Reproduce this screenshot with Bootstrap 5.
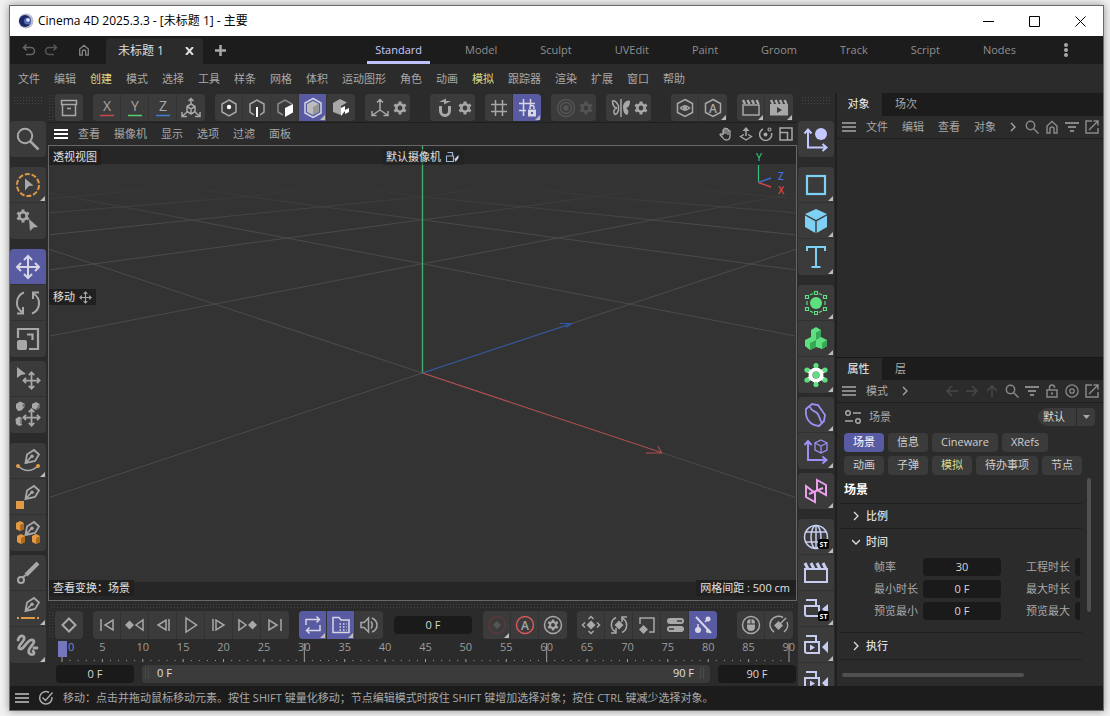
<!DOCTYPE html>
<html lang="zh-CN">
<head>
<meta charset="utf-8">
<meta name="viewport" content="width=device-width, initial-scale=1">
<title>Cinema 4D 2025.3.3 - [未标题 1] - 主要</title>
<link rel="stylesheet" href="https://cdn.jsdelivr.net/npm/bootstrap@5.3.0/dist/css/bootstrap.min.css">
<style>
:root{--bg:#2b2b2b;--dark:#1c1c1c;--btn:#3b3b3b;--on:#585ba2;--tx:#a8a8a8;--warn:#d9d98a}
body{background:#f1f1f1;font-family:"Open Sans","Noto Sans CJK SC",sans-serif;font-size:11px;line-height:16px;color:var(--tx);height:100vh;padding:5px 6px 5px 9px}
button,input{font:inherit;color:inherit;border:0;padding:0;background:none}
a{color:inherit;text-decoration:none;white-space:nowrap}
svg{display:block;flex:none;fill:none;stroke:currentColor;stroke-width:1.5}
svg .f{fill:currentColor;stroke:none}
svg text{font-family:"Open Sans",sans-serif;stroke:none;fill:currentColor}
svg text.st-text{fill:#fff;font-size:7px;font-weight:700}
.app-window{border:1px solid #6b6b6b;background:var(--bg);box-shadow:0 0 8px rgba(0,0,0,.4);height:100%}
.titlebar{height:30px;background:#fff;color:#000;font-size:12px}
.cap-btn{width:46px;height:30px;display:grid;place-items:center}
.cap-btn svg{stroke-width:1}
.tabbar{height:28px;background:var(--dark)}
.doc-tab{height:26px;align-self:flex-end;background:var(--bg);border-radius:4px 4px 0 0;color:#ddd;font-size:12px;width:97px}
.layouts{gap:27px}
.layouts a{line-height:28px;padding:0 8px;border-bottom:3px solid transparent;height:28px;color:#8f8f8f}
.layouts a.current{color:#c9cbff;border-color:#bfc1fa}
.more{margin:0 34px 0 39px}
.menubar{height:29px;gap:14px;padding-left:8px}
.warn{color:var(--warn)}
.main-area{min-height:0}
.center-area{min-width:0}
.dots{background-image:radial-gradient(#454545 35%,transparent 40%);background-size:3px 3px}
.strip{width:38px;overflow:hidden;padding-top:3px}
.strip.end{padding-left:1px}
.strip .dots{height:8px;margin:0 5px 17px 3px;flex:none}
.stack{width:36px;border-radius:4px;background:var(--btn);overflow:hidden;flex:none}
.stack button{width:36px;height:36px;display:grid;place-items:center;position:relative;border-bottom:1px solid #313131}
.stack button:last-child{border-bottom:0}
.gap-l{margin-top:10px}.gap-s{margin-top:4px}
.bar-group{display:flex;background:var(--btn);border-radius:4px;overflow:hidden;height:27px;flex:none}
.bar-group button{width:28px;height:100%;display:grid;place-items:center;position:relative;border-right:1px solid #333}
.bar-group button:last-child{border-right:0}
.bar-group button.slim{width:17px;margin-left:-1px;padding-right:3px}
.bar-group button.wide-in{border-right:0;width:29px}
.faint{color:#555}
button.on,.bar-group button.on,.stack button.on{background:var(--on);color:#d6d6e6}
.corner::after{content:"";position:absolute;right:1px;bottom:1px;border-style:solid;border-width:0 0 5px 5px;border-color:transparent transparent #bbb transparent}
.toolbar-top{height:29px;gap:10px;padding-top:1px;overflow:hidden}
.grip{width:5px;height:27px;margin-right:-8px}
.extra{margin-left:10px}
.panel-menu{height:23px;border-top:1px solid #1e1e1e;padding:0 4px 1px 6px}
.links{display:flex;gap:14px;margin-left:10px}
.tools{display:flex;align-items:center;gap:6px;margin-left:auto}
.viewport{border:1px solid #686868;background:#333;min-height:0;position:relative;overflow:hidden;color:#e0e0e0}
.viewport .scene{width:100%;height:100%;stroke-width:1}
.band{position:absolute;left:0;right:0;height:18px;background:#262626}
.band.top{top:0}.band.bottom{bottom:0}
.hud{position:absolute;display:flex;align-items:center;gap:4px;background:#202020;padding:0 4px;white-space:nowrap}
.hud.view{left:0;top:3px}
.hud.cam{left:50%;top:3px;transform:translateX(-50%);background:rgba(30,30,30,.5)}
.hud.tool{left:0;top:calc(32% - 2px)}
.hud.xform{left:0;bottom:4px}
.hud.spacing{right:0;bottom:4px;padding-right:6px}
.num{background:#1a1a1a;border-radius:4px;text-align:center;height:18px;width:78px;color:#d8d8d8;flex:none;padding-bottom:2px}
.divider{height:6px;margin:2px}
.controls{height:28px;gap:10px}
.controls .bar-group,.controls .grip{height:28px}
.controls .num{margin:5px 0 0 1px}
.controls .num + .bar-group{margin-left:1px}
.ruler{height:26px;margin:0 8px 0 14px;position:relative;color:#9c9c9c}
.ruler-labels{display:grid;grid-template-columns:1fr repeat(17,2fr) 1fr;text-align:center}
.ruler-labels span:first-child{text-align:left;padding-left:6px;color:#7f82cf}
.ruler-labels span:last-child{text-align:right;margin-right:-6px}
.ruler-ticks{position:absolute;inset:3px 0 0 0;width:100%;height:20px;overflow:visible;stroke-width:1;stroke:#a0a0a0}
.playhead{position:absolute;left:-4px;top:2px;width:9px;height:16px;background:#7577bd}
.range{height:21px;gap:8px;padding:0 1px 3px 8px}
.range-bar{height:18px;background:var(--btn);border-radius:4px;color:#e0e0e0;padding:0 4px 2px 3px;gap:6px}
.notch{width:6px;height:12px;background:repeating-linear-gradient(90deg,#4a4a4a 0 1px,transparent 1px 3px)}
.statusbar{height:24px;background:var(--dark);padding-left:5px;gap:9px}
.side-panel{width:268px;border-left:2px solid #202020;min-height:0}
.tabs{height:23px;background:var(--dark)}
.tabs button{padding:0 13px 2px}
.tabs button.current{background:var(--bg);color:#f0f0f0;width:45px;padding:0 2px 2px 0}
.tabs.split{border-top:1px solid #171717}
.tabs.split button{padding-bottom:0}
.side-menu{height:23px;border-bottom:1px solid #1e1e1e;padding:0 4px 1px 5px}
.side-menu .chev{margin-left:14px}
.side-menu .tools{color:#888}
.objects{height:218px}
.tools .dim{color:#484848}
.object-row{height:27px}
.combo{height:18px;background:var(--btn);border-radius:9px 4px 4px 9px;color:#dcdcdc}
.combo select{appearance:none;border:0;background:none;color:inherit;font:inherit;padding:0 11px 0 5px;outline:0}
.combo svg{border-left:1px solid #2b2b2b;color:#a8a8a8}
.chips{gap:4px;padding:3px 7px 0}
.chips .chip-row{display:flex;gap:4px}
.chips button{background:var(--btn);border-radius:4px;height:19px;padding:0 9px 1px;color:#cfcfcf;white-space:nowrap}
.chips button.on{color:#fff;background:var(--on)}
.chips button.warn{color:var(--warn)}
.attrs{padding:0 21px 0 4px;margin-top:2px;position:relative}
.attrs h2{font-size:12px;line-height:16px;font-weight:600;color:#fff;margin:0;padding:5px 0 5px 3px;border-bottom:1px solid #1f1f1f}
.sect{color:#dedede;gap:7px;padding:0 0 1px 12px;font-weight:500;height:25px}
.sect.open{height:27px;gap:6px;padding-left:11px}
.sect.last{height:27px}
.sect-box{border-bottom:1px solid #1f1f1f}
.time-box{height:104px}
.fields{display:grid;grid-template-columns:49px 78px 74px 5px;row-gap:4px;padding:2px 0 0 33px;overflow:hidden}
.fields label{line-height:18px;white-space:nowrap}
.fields label:nth-of-type(even){margin-left:25px}
.fields .num.cut{width:5px;border-radius:4px 0 0 4px}
.vbar{position:absolute;right:12px;top:1px;width:4px;height:134px;border-radius:2px;background:#505050}
.hbar{width:182px;height:4px;border-radius:2px;background:#505050;margin:13px 0 0 5px}
.c-axis{color:#c3c9ff}.c-spline{color:#7fd0f5}.c-gen{color:#5fe080}.c-def{color:#9a90f5}.c-sym{color:#eba0ee}.c-cam{color:#c6cdf0}
</style>
</head>
<body>
<svg width="0" height="0" class="position-absolute" aria-hidden="true">
<defs>
<g id="nib"><path stroke-width="1.800" d="M11.500 16L13 7.500L20 3L25 7.500L21 14ZM11.500 16L17.500 9.500"/><circle class="f" cx="18" cy="9.300" r="1.800"/></g>
<g id="st"><rect x="16" y="16" width="11" height="10" rx="2" fill="#000" stroke="none"/><text class="st-text" x="21.500" y="24" text-anchor="middle">ST</text></g>
</defs>
<symbol id="burger" viewBox="0 0 14 12"><path stroke-width="2" d="M0 2H14M0 6H14M0 10H14"/></symbol>
<symbol id="undo" viewBox="0 0 14 14"><path d="M4.500 1.500L1.500 4.500L4.500 7.500M1.500 4.500H9A3 3 0 0 1 9 11.500H4"/></symbol>
<symbol id="redo" viewBox="0 0 14 14"><path d="M9.500 1.500L12.500 4.500L9.500 7.500M12.500 4.500H5A3 3 0 0 0 5 11.500H10"/></symbol>
<symbol id="home" viewBox="0 0 14 14"><path d="M2 13V6L7 1.500L12 6V13H9V9A2 2 0 0 0 5 9V13Z"/></symbol>
<symbol id="search" viewBox="0 0 14 14"><circle cx="5.500" cy="5.500" r="4.200"/><path d="M8.500 8.500L13.500 13.500"/></symbol>
<symbol id="filter" viewBox="0 0 14 14"><path stroke-width="2" d="M0 3H14M3 7H11M5 11H9"/></symbol>
<symbol id="popout" viewBox="0 0 14 14"><path d="M7 1H1V13H13V8M4 10L13 1M8.500 1H13V5.500"/></symbol>
<symbol id="left" viewBox="0 0 14 14"><path d="M13 7H2M7 2L2 7L7 12"/></symbol>
<symbol id="right" viewBox="0 0 14 14"><path d="M1 7H12M7 2L12 7L7 12"/></symbol>
<symbol id="up" viewBox="0 0 14 14"><path d="M7 13V2M2 7L7 2L12 7"/></symbol>
<symbol id="lock" viewBox="0 0 14 14"><rect x="2" y="6" width="10" height="7"/><path d="M4.500 6V3.500A2.500 2.500 0 0 1 9.500 3.500V4"/><rect class="f" x="6" y="8.500" width="2" height="2"/></symbol>
<symbol id="target" viewBox="0 0 16 16"><circle cx="8" cy="8" r="7"/><circle cx="8" cy="8" r="2.500"/></symbol>
<symbol id="chev" viewBox="0 0 6 10"><path stroke-width="1.300" d="M1 1L5 5L1 9"/></symbol>
<symbol id="chevd" viewBox="0 0 8 6"><path stroke-width="1.300" d="M0 1L4 5L8 1"/></symbol>
<symbol id="hand" viewBox="0 0 14 14"><path stroke-width="1.300" d="M4 8V3.500Q4 2.500 5 3V7M5 7V2Q6 .5 7 2V7M7 7V2.500Q8 1 9 2.500V8M9 8V4Q10 3 11 4V9Q11 13 7.500 13Q5 13 3.500 10.500L1 7.500Q1.500 6 4 8"/></symbol>
<symbol id="updown" viewBox="0 0 14 14"><path d="M7 2V9"/><path class="f" d="M7 0L10.500 4H3.500Z"/><path stroke-width="1.300" d="M5 7.500L1.500 9.500L7 13L12.500 9.500L9 7.500"/></symbol>
<symbol id="orbit" viewBox="0 0 14 14"><path d="M4 2A6 6 0 1 0 12.500 6"/><circle class="f" cx="6.500" cy="7.500" r="2"/><circle cx="10.500" cy="2.500" r="1.500" stroke-width="1.200"/></symbol>
<symbol id="views" viewBox="0 0 14 14"><path d="M1 1H13V13H1ZM1 5.500H8.500V13"/></symbol>
<symbol id="gear" viewBox="0 0 14 14"><circle cx="7" cy="7" r="3.700" stroke-width="2.600"/><path stroke-width="3" d="M7 .4V2.500M7 11.500V13.600M1.300 3.700L3 4.700M11 9.300L12.700 10.300M1.300 10.300L3 9.300M11 4.700L12.700 3.700"/></symbol>
<symbol id="archive" viewBox="0 0 24 24"><rect x="4.500" y="4.500" width="15" height="4"/><path d="M5.500 8.500V19.500H18.500V8.500M10 12.500H14"/></symbol>
<symbol id="coord" viewBox="0 0 24 24"><path d="M12 8V3M9.500 5L12 2.500L14.500 5M8 16L3.500 20M3 16V20.500H8M16 16L20.500 20M21 16V20.500H16M12 8L16 10.500V15.500L12 18L8 15.500V10.500ZM8 10.500L12 13L16 10.500M12 13V18"/></symbol>
<symbol id="hexpoint" viewBox="0 0 24 24"><path d="M12 4L19 8V16L12 20L5 16V8Z"/><circle cx="12" cy="11" r="2.200" fill="#fff" stroke="none"/></symbol>
<symbol id="hexedge" viewBox="0 0 24 24"><path d="M9 19L5 16V8L12 4L19 8V16L15 19"/><path stroke="#fff" stroke-width="2" d="M12 11V21"/></symbol>
<symbol id="hexface" viewBox="0 0 24 24"><path stroke="#8a8a8a" d="M19 8L12 4L5 8V16L10 19"/><path fill="#fff" stroke="none" d="M12 12L20 8V16.500L12 21Z"/></symbol>
<symbol id="hexsolid" viewBox="0 0 24 24"><path d="M12 2.500L20 7V17L12 21.500L4 17V7Z"/><path stroke="none" fill="#bdbdbd" d="M12 5L18 8L12 11.500V19L6 16V8Z"/><path stroke="none" fill="#989898" d="M18 8V16L12 19V11.500Z"/></symbol>
<symbol id="hextex" viewBox="0 0 24 24"><path class="f" d="M11 3L18 6.500L12 10V19L4 16V7Z"/><path fill="#fff" stroke="none" d="M12 12L16 10V14L20 12V16L16 18V15L12 20Z"/></symbol>
<symbol id="axis" viewBox="0 0 24 24"><path d="M12 14V4M9 6.500L12 3.500L15 6.500M12 14L4.500 19M4 15V19.500H8.500M12 14L19.500 19M20 15V19.500H15.500"/></symbol>
<symbol id="magnet" viewBox="0 0 24 24"><path stroke-width="3" d="M7.500 10V15A4.500 4.500 0 0 0 16.500 15V10"/><path class="f" d="M6 6L13 2.500V5H18L11 8.500V6Z"/></symbol>
<symbol id="grid" viewBox="0 0 24 24"><path d="M8.500 4V20M15.500 4V20M4 8.500H20M4 15.500H20"/></symbol>
<symbol id="gridlock" viewBox="0 0 24 24"><path d="M8.500 3V20M15.500 3V10M4 7.500H20M4 14.500H11"/><rect class="f" x="13" y="13.500" width="8" height="7"/><path d="M15 13V11.500A2 2 0 0 1 19 11.500V13"/><rect x="16" y="16" width="2" height="2" fill="#585ba2" stroke="none"/></symbol>
<symbol id="rings" viewBox="0 0 24 24"><circle cx="12" cy="12" r="8.500"/><circle cx="12" cy="12" r="5.500"/><circle class="f" cx="12" cy="12" r="2.800"/></symbol>
<symbol id="butterfly" viewBox="0 0 24 24"><path d="M12 3V21M9.500 10C8 6 5 4 3.500 5C3.500 9 5 11.500 8 12C4.500 13 4 16 6 18.500C8.500 18 10 15.500 9.500 10"/><path class="f" d="M14 10C15 6 18 3.500 21 5C21 9 20 11.500 17 12C20 14 20 17 18 19C15 18 14 15 14 10"/></symbol>
<symbol id="hexeye" viewBox="0 0 24 24"><path d="M12 3.500L19.500 7.500V16.500L12 20.500L4.500 16.500V7.500Z"/><path d="M7.500 12Q12 7.500 16.500 12Q12 16.500 7.500 12Z"/><circle class="f" cx="12" cy="12" r="2"/></symbol>
<symbol id="hexa" viewBox="0 0 24 24"><path d="M12 3.500L19.500 7.500V16.500L12 20.500L4.500 16.500V7.500Z"/><text x="12" y="16.500" font-size="12" font-weight="600" text-anchor="middle">A</text></symbol>
<symbol id="clap" viewBox="0 0 24 24"><path d="M4 9V19H20V9Z"/><path stroke-width="2.500" d="M4 4L6 8M8.500 4L10.500 8M13 4L15 8M17.500 4L19.500 8"/></symbol>
<symbol id="clapplay" viewBox="0 0 24 24"><path class="f" d="M3 8H21V19.500H3Z"/><path stroke-width="2.500" d="M4 4L6 8M8.500 4L10.500 8M13 4L15 8M17.500 4L19.500 8"/><path fill="#3b3b3b" stroke="none" d="M10 11L15 14L10 17Z"/></symbol>
<symbol id="key" viewBox="0 0 24 24"><path stroke-width="2" d="M12 5.500L18.500 12L12 18.500L5.500 12Z"/></symbol>
<symbol id="first" viewBox="0 0 24 24"><path d="M6 6V18M18 7V17L10 12Z"/></symbol>
<symbol id="prevkey" viewBox="0 0 24 24"><path class="f" d="M2 12L6.500 7.500L11 12L6.500 16.500Z"/><path d="M20 7V17L13 12Z"/></symbol>
<symbol id="prev" viewBox="0 0 24 24"><path d="M18 6V18M15 7V17L7 12Z"/></symbol>
<symbol id="play" viewBox="0 0 24 24"><path d="M7 5V19L17.500 12Z"/></symbol>
<symbol id="gear24" viewBox="0 0 24 24"><circle cx="12" cy="12" r="8.500"/><circle cx="12" cy="12" r="3" stroke-width="2"/><path stroke-width="2.500" d="M12 6.500V9M12 15V17.500M7.200 9.200L9.500 10.500M14.500 13.500L16.800 14.800M7.200 14.800L9.500 13.500M14.500 10.500L16.800 9.200"/></symbol>
<symbol id="loop" viewBox="0 0 24 24"><path d="M5 12V6.500H18M15.500 3.500L18.500 6.500L15.500 9.500M19 12V17.500H6M8.500 14.500L5.500 17.500L8.500 20.500"/></symbol>
<symbol id="folder" viewBox="0 0 24 24"><path d="M4 4.500H10L12 7H20V19.500H4Z"/><path stroke-width="1.500" stroke-dasharray="1.500 2" d="M10.500 11H18M10.500 14H18M10.500 17H18"/></symbol>
<symbol id="sound" viewBox="0 0 24 24"><path d="M4 9.500H7L11.500 5V19L7 14.500H4ZM14 8.500Q16.500 12 14 15.500M15 5Q20 7.500 20 12Q20 17 15 19"/></symbol>
<symbol id="reckey" viewBox="0 0 24 24"><circle cx="12" cy="12" r="8.500" stroke="#5e3838"/><path class="f" d="M12 8L16 12L12 16L8 12Z"/></symbol>
<symbol id="auto" viewBox="0 0 24 24"><circle cx="12" cy="12" r="8.500" stroke="#d8595c"/><text x="12" y="16.500" font-size="12" font-weight="600" text-anchor="middle">A</text></symbol>
<symbol id="kpos" viewBox="0 0 24 24"><path class="f" d="M12 7.500L16.500 12L12 16.500L7.500 12Z"/><path d="M9.500 6L12 3.500L14.500 6M9.500 18L12 20.500L14.500 18M6 9.500L3.500 12L6 14.500M18 9.500L20.500 12L18 14.500"/></symbol>
<symbol id="krot" viewBox="0 0 24 24"><path class="f" d="M12 7.500L16.500 12L12 16.500L7.500 12Z"/><path d="M9 19A8 8 0 0 1 9 4.500M4 20H9V15M15 5A8 8 0 0 1 15 19.500M20 4H15V9"/></symbol>
<symbol id="kscale" viewBox="0 0 24 24"><path d="M5 11V5H19V19H14"/><path class="f" d="M8.500 12L13 16.500L8.500 21L4 16.500Z"/></symbol>
<symbol id="kparam" viewBox="0 0 24 24"><rect class="f" x="4" y="5" width="17" height="6" rx="3"/><rect class="f" x="4" y="13" width="17" height="6" rx="3"/><path stroke="#3b3b3b" d="M14 8H19M6 16H11"/></symbol>
<symbol id="kpla" viewBox="0 0 24 24"><path stroke-width="2" d="M5 4L20 20"/><circle class="f" cx="17" cy="6" r="2.500"/><circle class="f" cx="7" cy="17" r="3"/><circle class="f" cx="17" cy="18" r="2"/><path d="M7 17V11M17 6L14 9"/></symbol>
<symbol id="mouse" viewBox="0 0 24 24"><circle cx="12" cy="12" r="8.500"/><rect class="f" x="8" y="6" width="8" height="12" rx="4"/><path stroke="#3b3b3b" stroke-width="1" d="M8 11H16M12 6V11"/></symbol>
<symbol id="dial" viewBox="0 0 24 24"><path d="M7 19A8.500 8.500 0 0 1 16 4.500M20 9A8.500 8.500 0 0 1 17 19M12 12L19 5"/><path class="f" d="M11.500 8L16 12.500L11.500 17L7 12.500Z"/></symbol>
<symbol id="check" viewBox="0 0 16 16"><path d="M14 7A6.200 6.200 0 1 1 11 2.500M4.500 7.500L7.500 10.500L14.500 2.500"/></symbol>
<!-- tool strip symbols -->
<symbol id="mag" viewBox="0 0 28 28"><circle cx="11" cy="11" r="7.200" stroke-width="2"/><path stroke-width="2.500" d="M16 16L24.500 24.500"/></symbol>
<symbol id="select" viewBox="0 0 28 28"><circle cx="14" cy="14" r="11" stroke="#e29a45" stroke-width="2" stroke-dasharray="5 1.900"/><path class="f" d="M11 7.500L19.500 14.500L15 15L11 19.500Z"/></symbol>
<symbol id="gearcur" viewBox="0 0 28 28"><g transform="translate(2 2)"><circle cx="7" cy="7" r="3.700" stroke-width="2.600"/><path stroke-width="3" d="M7 .4V2.500M7 11.500V13.600M1.300 3.700L3 4.700M11 9.300L12.700 10.300M1.300 10.300L3 9.300M11 4.700L12.700 3.700"/></g><path class="f" d="M15 12L24 20L19.500 20.500L16 24Z"/></symbol>
<symbol id="move" viewBox="0 0 28 28"><path stroke-width="2" d="M14 3V25M3 14H25M10 7L14 3L18 7M10 21L14 25L18 21M7 10L3 14L7 18M21 10L25 14L21 18"/></symbol>
<symbol id="rotate" viewBox="0 0 28 28"><path stroke-width="2" d="M8 23A11 11 0 0 1 10 3.500M3 24.500H9V18M20 5A11 11 0 0 1 18 24.500M25 3.500H19V10"/></symbol>
<symbol id="scale" viewBox="0 0 28 28"><path stroke-width="2.200" d="M4 13V4H24V24H15M13 9.500H18.500V15"/><rect class="f" x="3" y="15" width="10" height="10" rx="2"/></symbol>
<symbol id="curmove" viewBox="0 0 28 28"><path class="f" d="M3 2L12 9L7 10L3 13Z"/><g transform="translate(8 6) scale(.68)"><path stroke-width="2.600" d="M14 2V26M2 14H26M10 6L14 2L18 6M10 22L14 26L18 22M6 10L2 14L6 18M22 10L26 14L22 18"/></g></symbol>
<symbol id="objmove" viewBox="0 0 28 28"><g class="f"><path d="M2 3L6 .5L10.500 2.500V6L7.500 9.500L4 10L2 7ZM18 3L22 1L25.500 3V7L22 9L18 7ZM1.500 18L5 15.500L8 17V24L5 25L2 23Z"/></g><path stroke="#6a6a6a" stroke-width="1.500" d="M9.500 3V6M24.500 4V7L22 8.500M7 17.500V23"/><g transform="translate(8 7) scale(.68)"><path stroke-width="2.600" d="M14 2V26M2 14H26M10 6L14 2L18 6M10 22L14 26L18 22M6 10L2 14L6 18M22 10L26 14L22 18"/></g></symbol>
<symbol id="spline" viewBox="0 0 28 28"><use href="#nib"/><path d="M4 19Q14 28 24 19"/><circle cx="4" cy="19" r="2" fill="#e29a45" stroke="none"/><circle cx="24" cy="19" r="2" fill="#e29a45" stroke="none"/></symbol>
<symbol id="polypen" viewBox="0 0 28 28"><use href="#nib"/><rect x="2" y="18" width="8" height="8" fill="#e29a45" stroke="none"/></symbol>
<symbol id="cubepen" viewBox="0 0 28 28"><use href="#nib"/><g stroke="none"><path fill="#e29a45" d="M2 4L6 2L10 4V10L6 12L2 10ZM3 17L7 15L11 17V23L7 25L3 23ZM18 17L22 15L26 17V23L22 25L18 23Z"/><path fill="#b06a1c" d="M6 6L10 4V10L6 12ZM7 19L11 17V23L7 25ZM22 19L26 17V23L22 25Z"/></g></symbol>
<symbol id="brush" viewBox="0 0 28 28"><path stroke-width="4" d="M12 16L24 4"/><circle cx="7" cy="21" r="3" stroke-width="2"/><path stroke-width="2" d="M9 18L12 16"/></symbol>
<symbol id="linepen" viewBox="0 0 28 28"><use href="#nib"/><path stroke="#e29a45" stroke-width="2" d="M3 23H5M7 23H21M23 23H25"/></symbol>
<symbol id="squiggle" viewBox="0 0 28 28"><path stroke-width="2.800" stroke-linecap="round" d="M4 9C6 2 13 5 9 10C5 15 3 18 7 18C11 17 14 7 19 9C23 12 12 18 15 22C18 25 22 23 19 20M20 17L23 17"/></symbol>
<symbol id="objaxis" viewBox="0 0 28 28"><path stroke-width="2" d="M6 5V22.500H24M2.500 8.500L6 4.500L9.500 8.500M20.500 19L24.500 22.500L20.500 26"/><circle class="f" cx="19" cy="9" r="6"/></symbol>
<symbol id="rectspl" viewBox="0 0 28 28"><rect x="5" y="5" width="18" height="18" stroke-width="2.200"/></symbol>
<symbol id="cube" viewBox="0 0 28 28"><path class="f" d="M14 2L25 7L14 13L3 7ZM3 8.500L13.300 14.200V26L3 20ZM25 8.500L14.700 14.200V26L25 20Z"/></symbol>
<symbol id="textobj" viewBox="0 0 28 28"><path stroke-width="2" d="M5 8V4H23V8M14 4V24M9.500 24H18.500"/></symbol>
<symbol id="field" viewBox="0 0 28 28"><circle class="f" cx="14" cy="14" r="6"/><path d="M12.500 2.500H15.500V5.500H12.500ZM12.500 22.500H15.500V25.500H12.500ZM3.500 6.500H6.500V9.500H3.500ZM21.500 6.500H24.500V9.500H21.500ZM3.500 18.500H6.500V21.500H3.500ZM21.500 18.500H24.500V21.500H21.500ZM5 12V16M23 12V16M8 6L11 4.500M17 4.500L20 6M8 22L11 23.500M17 23.500L20 22" stroke-width="1.200"/></symbol>
<symbol id="blocks" viewBox="0 0 28 28"><path class="f" d="M9 5L14 2L19 5V12L25 15V21L20 24L14 22L8 25L3 21V15L9 12Z"/><path stroke="none" fill="#37a855" d="M14 7.500L19 5V12L14 15ZM8 18L14 15V22L8 25ZM20 18L25 15V21L20 24Z"/></symbol>
<symbol id="cloner" viewBox="0 0 28 28"><circle cx="14" cy="14" r="5.500" stroke="#fff" stroke-width="4"/><path stroke="#fff" stroke-width="4" d="M6 9.500L10 12M22 9.500L18 12M6 18.500L10 16M22 18.500L18 16M14 5V9M14 19V23"/><g class="f"><circle cx="14" cy="4.500" r="2.600"/><circle cx="14" cy="23.500" r="2.600"/><circle cx="5" cy="9" r="2.600"/><circle cx="23" cy="9" r="2.600"/><circle cx="5" cy="19" r="2.600"/><circle cx="23" cy="19" r="2.600"/><circle cx="14" cy="14" r="3.200"/></g></symbol>
<symbol id="deform" viewBox="0 0 28 28"><path stroke-width="1.800" d="M4 8L10 3L16 4L23 14L22 20L17 25C8 24 3 18 4 8ZM8 6C10 11 12 9 15 12C18 15 17 18 20 22"/></symbol>
<symbol id="axiscube" viewBox="0 0 28 28"><path stroke-width="2" d="M6 5V23H24M2.500 8L6 4L9.500 8M20.500 19.500L24.500 23L20.500 26.500"/><path stroke-width="1.300" d="M19 3L25 6V13L19 16L13 13V6ZM13 6L19 9L25 6M19 9V16"/></symbol>
<symbol id="sym" viewBox="0 0 28 28"><path stroke-width="2" d="M4 9L13 16V25L4 20ZM15 3L24 8V18L15 13ZM7 17L21 11"/></symbol>
<symbol id="globe" viewBox="0 0 28 28"><circle cx="14" cy="14" r="11.500"/><ellipse cx="14" cy="14" rx="5" ry="11.500"/><path d="M4 9H24M4 19H24M14 2.500V25.500"/><use href="#st"/></symbol>
<symbol id="clapbig" viewBox="0 0 28 28"><path stroke-width="2" d="M3 10V23H25V10Z"/><path stroke-width="3" d="M3 4L6 10M9 4L12 10M15 4L18 10M21 4L24 10"/></symbol>
<symbol id="camst" viewBox="0 0 28 28"><path stroke-width="2" d="M4 5H14V11M3 11H17V21H5A2 2 0 0 1 3 19Z"/><path class="f" d="M20 14L26 9V20Z"/><use href="#st"/></symbol>
<symbol id="camplay" viewBox="0 0 28 28"><path stroke-width="2" d="M4 5H14V11M3 11H17V22H5A2 2 0 0 1 3 20Z"/><path class="f" d="M20 16L26 10V22ZM8 13.500L13 16.500L8 19.500Z"/></symbol>
</svg>

<div class="app-window d-flex flex-column">
<header class="titlebar d-flex align-items-center flex-shrink-0">
 <svg class="ms-2" width="16" height="16" viewBox="0 0 16 16"><circle cx="8" cy="8" r="7.500" fill="#b9bdcb" stroke="none"/><circle cx="7" cy="8" r="6" fill="#1b2766" stroke="none"/><circle cx="9.500" cy="8" r="3.500" fill="#5668b8" stroke="none"/><circle cx="10" cy="7" r="1.800" fill="#e8ecff" stroke="none"/></svg>
 <span class="ps-1">Cinema 4D 2025.3.3 - [未标题 1] - 主要</span>
 <div class="d-flex ms-auto">
  <button class="cap-btn" aria-label="最小化"><svg width="11" height="11"><path d="M0 5.500H11"/></svg></button>
  <button class="cap-btn" aria-label="最大化"><svg width="11" height="11"><path d="M.5 .5H10.500V10.500H.5Z"/></svg></button>
  <button class="cap-btn" aria-label="关闭"><svg width="11" height="11"><path d="M.5 .5L10.500 10.500M10.500 .5L.5 10.500"/></svg></button>
 </div>
</header>

<div class="tabbar d-flex align-items-center flex-shrink-0">
 <button class="ms-2 ps-1" aria-label="撤销"><svg width="14" height="14" color="#666"><use href="#undo"/></svg></button>
 <button class="ms-1 ps-1" aria-label="重做"><svg width="14" height="14" color="#555"><use href="#redo"/></svg></button>
 <button class="ms-3 ps-1" aria-label="主页"><svg width="12" height="12" color="#888"><use href="#home"/></svg></button>
 <div class="doc-tab d-flex align-items-center justify-content-between ms-3 px-2"><span class="ps-1">未标题 1</span><button aria-label="关闭标签"><svg width="11" height="8" viewBox="0 0 11 8"><path stroke-width="2" d="M2 0L9 8M9 0L2 8"/></svg></button></div>
 <button class="ms-2 ps-1" aria-label="新建"><svg width="11" height="11"><path stroke-width="2.500" d="M5.500 0V11M0 5.500H11"/></svg></button>
 <nav class="layouts d-flex ms-auto">
  <a class="current" href="#">Standard</a><a href="#">Model</a><a href="#">Sculpt</a><a href="#">UVEdit</a><a href="#">Paint</a><a href="#">Groom</a><a href="#">Track</a><a href="#">Script</a><a href="#">Nodes</a>
 </nav>
 <button class="more" aria-label="更多"><svg width="6" height="16"><g class="f"><circle cx="3" cy="3" r="2"/><circle cx="3" cy="8" r="2"/><circle cx="3" cy="13" r="2"/></g></svg></button>
</div>

<nav class="menubar d-flex align-items-center flex-shrink-0">
 <a href="#">文件</a><a href="#">编辑</a><a href="#" class="warn">创建</a><a href="#">模式</a><a href="#">选择</a><a href="#">工具</a><a href="#">样条</a><a href="#">网格</a><a href="#">体积</a><a href="#">运动图形</a><a href="#">角色</a><a href="#">动画</a><a href="#" class="warn">模拟</a><a href="#">跟踪器</a><a href="#">渲染</a><a href="#">扩展</a><a href="#">窗口</a><a href="#">帮助</a>
</nav>

<main class="main-area d-flex flex-grow-1">
 <aside class="strip d-flex flex-column flex-shrink-0">
  <div class="dots"></div>
  <div class="stack"><button aria-label="搜索"><svg width="28" height="28"><use href="#mag"/></svg></button></div>
  <div class="stack gap-l"><button class="corner" aria-label="实时选择"><svg width="28" height="28"><use href="#select"/></svg></button><button aria-label="选择设置"><svg width="28" height="28"><use href="#gearcur"/></svg></button></div>
  <div class="stack gap-l"><button class="on" aria-label="移动"><svg width="28" height="28"><use href="#move"/></svg></button><button aria-label="旋转"><svg width="28" height="28"><use href="#rotate"/></svg></button><button aria-label="缩放"><svg width="28" height="28"><use href="#scale"/></svg></button></div>
  <div class="stack gap-s"><button aria-label="选择移动"><svg width="28" height="28"><use href="#curmove"/></svg></button><button aria-label="放置"><svg width="28" height="28"><use href="#objmove"/></svg></button></div>
  <div class="stack gap-l"><button class="corner" aria-label="样条画笔"><svg width="28" height="28"><use href="#spline"/></svg></button><button aria-label="多边形画笔"><svg width="28" height="28"><use href="#polypen"/></svg></button><button aria-label="体积画笔"><svg width="28" height="28"><use href="#cubepen"/></svg></button></div>
  <div class="stack gap-s"><button aria-label="笔刷"><svg width="28" height="28"><use href="#brush"/></svg></button><button class="corner" aria-label="线条画笔"><svg width="28" height="28"><use href="#linepen"/></svg></button><button class="corner" aria-label="涂鸦"><svg width="28" height="28"><use href="#squiggle"/></svg></button></div>
 </aside>

 <section class="center-area d-flex flex-column flex-grow-1">
  <div class="toolbar-top d-flex align-items-start flex-shrink-0">
   <div class="grip dots"></div>
   <div class="bar-group"><button aria-label="资产"><svg width="24" height="24"><use href="#archive"/></svg></button></div>
   <div class="bar-group">
    <button aria-label="X"><svg width="24" height="24"><text x="12" y="15" font-size="14" text-anchor="middle">X</text><path stroke="#c9474c" d="M5 19.500H19"/></svg></button>
    <button aria-label="Y"><svg width="24" height="24"><text x="12" y="15" font-size="14" text-anchor="middle">Y</text><path stroke="#56cf70" d="M5 19.500H19"/></svg></button>
    <button aria-label="Z"><svg width="24" height="24"><text x="12" y="15" font-size="14" text-anchor="middle">Z</text><path stroke="#3e7ed0" d="M5 19.500H19"/></svg></button>
    <button aria-label="坐标"><svg width="24" height="24"><use href="#coord"/></svg></button></div>
   <div class="bar-group"><button aria-label="点"><svg width="24" height="24"><use href="#hexpoint"/></svg></button><button aria-label="边"><svg width="24" height="24"><use href="#hexedge"/></svg></button><button aria-label="多边形"><svg width="24" height="24"><use href="#hexface"/></svg></button><button class="on corner" aria-label="模型"><svg width="24" height="24"><use href="#hexsolid"/></svg></button><button aria-label="纹理"><svg width="24" height="24"><use href="#hextex"/></svg></button></div>
   <div class="bar-group"><button class="wide-in" aria-label="轴"><svg width="24" height="24"><use href="#axis"/></svg></button><button class="slim" aria-label="轴设置"><svg width="14" height="14"><use href="#gear"/></svg></button></div>
   <div class="bar-group extra"><button class="wide-in" aria-label="捕捉"><svg width="24" height="24"><use href="#magnet"/></svg></button><button class="slim" aria-label="捕捉设置"><svg width="14" height="14"><use href="#gear"/></svg></button></div>
   <div class="bar-group"><button aria-label="工作平面"><svg width="24" height="24"><use href="#grid"/></svg></button><button class="on corner" aria-label="锁定平面"><svg width="24" height="24"><use href="#gridlock"/></svg></button></div>
   <div class="bar-group faint"><button class="wide-in" aria-label="软选择"><svg width="24" height="24"><use href="#rings"/></svg></button><button class="slim" aria-label="软选择设置"><svg width="14" height="14"><use href="#gear"/></svg></button></div>
   <div class="bar-group"><button class="wide-in" aria-label="对称"><svg width="24" height="24"><use href="#butterfly"/></svg></button><button class="slim" aria-label="对称设置"><svg width="14" height="14"><use href="#gear"/></svg></button></div>
   <div class="bar-group extra"><button aria-label="视窗独显"><svg width="24" height="24"><use href="#hexeye"/></svg></button><button class="corner" aria-label="自动"><svg width="24" height="24"><use href="#hexa"/></svg></button></div>
   <div class="bar-group"><button class="corner" aria-label="渲染视图"><svg width="24" height="24"><use href="#clap"/></svg></button><button class="corner" aria-label="渲染"><svg width="24" height="24"><use href="#clapplay"/></svg></button></div>
  </div>

  <nav class="panel-menu d-flex align-items-center flex-shrink-0">
   <button class="text-white" aria-label="菜单"><svg width="14" height="12"><use href="#burger"/></svg></button>
   <div class="links"><a href="#">查看</a><a href="#">摄像机</a><a href="#">显示</a><a href="#">选项</a><a href="#">过滤</a><a href="#">面板</a></div>
   <div class="tools">
    <button aria-label="平移"><svg width="14" height="14"><use href="#hand"/></svg></button><button aria-label="推拉"><svg width="14" height="14"><use href="#updown"/></svg></button><button aria-label="环绕"><svg width="14" height="14"><use href="#orbit"/></svg></button><button aria-label="切换视图"><svg width="14" height="14"><use href="#views"/></svg></button></div>
  </nav>

  <div class="viewport flex-grow-1">
   <div class="band top"></div><div class="band bottom"></div>
   <svg class="scene position-relative" viewBox="1 1 746 454" preserveAspectRatio="xMidYMid slice">
    <defs><linearGradient id="fade" x1="0" y1="0" x2="0" y2="1"><stop offset="0" stop-color="#333"/><stop offset="1" stop-color="#333" stop-opacity="0"/></linearGradient></defs>
    <g stroke="#4b4b4b">
     <path d="M0 104L374 228L746 352M-10 46L20 52L74 62L374 119L746 191M160 46L274 62L374 75L746 125M310 43L374 52L474 62L602 75L746 90M480 43L550 52L672 62L746 68M650 45L746 54"/>
     <path d="M748 104L374 228L2 352M758 46L728 52L674 62L374 119L2 191M588 46L474 62L374 75L2 125M438 43L374 52L274 62L146 75L2 90M268 43L198 52L76 62L2 68M98 45L2 54"/>
    </g>
    <rect x="0" y="40" width="748" height="40" fill="url(#fade)" stroke="none"/>
    <path stroke="#3fae6a" stroke-width="1.400" d="M374 0V228"/>
    <path stroke="#2f58a8" d="M374 228L522 179M511 178.500H523L517 183"/>
    <path stroke="#b84c4c" d="M374 228L613 307.500M597 308H613L609 301"/>
   </svg>
   <span class="hud view">透视视图</span>
   <span class="hud cam">默认摄像机 <svg width="14" height="12" viewBox="0 0 14 12"><path stroke="#9fb4d8" stroke-width="1.200" d="M2 1.500H7V5M1 5H8V10.500H1Z"/><path fill="#c8d4ea" stroke="none" d="M9 8L13 4V7L10 11Z"/></svg></span>
   <span class="hud tool">移动 <svg width="13" height="13" viewBox="0 0 14 14" color="#aaa"><path stroke-width="1.200" d="M7 1V13M1 7H13M5 3L7 1L9 3M5 11L7 13L9 11M3 5L1 7L3 9M11 5L13 7L11 9"/></svg></span>
   <span class="hud xform">查看变换：场景</span>
   <span class="hud spacing">网格间距 : 500 cm</span>
   <svg class="position-absolute top-0 end-0" width="50" height="54" viewBox="0 0 50 54"><path stroke="#35c277" d="M12.500 19V36" stroke-width="1.200"/><path stroke="#3c6ccf" d="M12.500 36.500L25 32"/><path stroke="#d04545" d="M12.500 36.500L25 41"/><text x="13" y="15" font-size="11" text-anchor="middle" style="fill:#35d47c">Y</text><text x="35" y="34" font-size="10" font-weight="600" text-anchor="middle" style="fill:#3f74e0">Z</text><text x="35" y="48" font-size="10" font-weight="600" text-anchor="middle" style="fill:#dd4545">X</text></svg>
  </div>

  <div class="divider dots flex-shrink-0"></div>
  <div class="controls d-flex align-items-start flex-shrink-0">
   <div class="grip dots"></div>
   <div class="bar-group"><button aria-label="关键帧"><svg width="24" height="24"><use href="#key"/></svg></button></div>
   <div class="bar-group">
    <button aria-label="首帧"><svg width="24" height="24"><use href="#first"/></svg></button><button aria-label="上一关键帧"><svg width="24" height="24"><use href="#prevkey"/></svg></button><button aria-label="上一帧"><svg width="24" height="24"><use href="#prev"/></svg></button><button aria-label="播放"><svg width="24" height="24"><use href="#play"/></svg></button><button aria-label="下一帧"><svg width="24" height="24"><g transform="matrix(-1 0 0 1 24 0)"><use href="#prev"/></g></svg></button><button aria-label="下一关键帧"><svg width="24" height="24"><g transform="matrix(-1 0 0 1 24 0)"><use href="#prevkey"/></g></svg></button><button aria-label="末帧"><svg width="24" height="24"><g transform="matrix(-1 0 0 1 24 0)"><use href="#first"/></g></svg></button></div>
   <div class="bar-group"><button class="on corner" aria-label="循环"><svg width="24" height="24"><use href="#loop"/></svg></button><button class="on corner" aria-label="预览范围"><svg width="24" height="24"><use href="#folder"/></svg></button><button aria-label="声音"><svg width="24" height="24"><use href="#sound"/></svg></button></div>
   <input class="num" aria-label="当前帧" value="0 F">
   <div class="bar-group"><button class="corner faint" aria-label="记录"><svg width="24" height="24"><use href="#reckey"/></svg></button><button aria-label="自动关键帧"><svg width="24" height="24"><use href="#auto"/></svg></button><button aria-label="关键帧设置"><svg width="24" height="24"><use href="#gear24"/></svg></button></div>
   <div class="bar-group"><button aria-label="位置"><svg width="24" height="24"><use href="#kpos"/></svg></button><button aria-label="旋转"><svg width="24" height="24"><use href="#krot"/></svg></button><button aria-label="缩放"><svg width="24" height="24"><use href="#kscale"/></svg></button><button aria-label="参数"><svg width="24" height="24"><use href="#kparam"/></svg></button><button class="on" aria-label="点级别"><svg width="24" height="24"><use href="#kpla"/></svg></button></div>
   <div class="bar-group extra"><button aria-label="鼠标"><svg width="24" height="24"><use href="#mouse"/></svg></button><button aria-label="速率"><svg width="24" height="24"><use href="#dial"/></svg></button></div>
  </div>
  <div class="ruler flex-shrink-0">
   <div class="ruler-labels" id="labels"></div>
   <svg class="ruler-ticks" viewBox="0 0 90 20" preserveAspectRatio="none"><path id="ticks" vector-effect="non-scaling-stroke"/></svg>
   <div class="playhead"></div>
  </div>
  <div class="range d-flex flex-shrink-0">
   <input class="num" aria-label="起始帧" value="0 F">
   <div class="range-bar flex-grow-1 d-flex align-items-center"><span class="notch"></span><span>0 F</span><span class="ms-auto">90 F</span><span class="notch"></span></div>
   <input class="num" aria-label="结束帧" value="90 F">
  </div>
 </section>

 <aside class="strip end d-flex flex-column flex-shrink-0">
  <div class="dots"></div>
  <div class="stack c-axis"><button aria-label="对象轴"><svg width="28" height="28"><use href="#objaxis"/></svg></button></div>
  <div class="stack gap-l c-spline"><button class="corner" aria-label="矩形"><svg width="28" height="28"><use href="#rectspl"/></svg></button><button class="corner" aria-label="立方体"><svg width="28" height="28"><use href="#cube"/></svg></button><button class="corner" aria-label="文本"><svg width="28" height="28"><use href="#textobj"/></svg></button></div>
  <div class="stack gap-l c-gen"><button class="corner" aria-label="力场"><svg width="28" height="28"><use href="#field"/></svg></button><button class="corner" aria-label="体积生成"><svg width="28" height="28"><use href="#blocks"/></svg></button><button class="corner" aria-label="克隆"><svg width="28" height="28"><use href="#cloner"/></svg></button></div>
  <div class="stack gap-s c-def"><button class="corner" aria-label="变形器"><svg width="28" height="28"><use href="#deform"/></svg></button><button class="corner" aria-label="轴立方体"><svg width="28" height="28"><use href="#axiscube"/></svg></button></div>
  <div class="stack gap-s c-sym"><button class="corner" aria-label="对称"><svg width="28" height="28"><use href="#sym"/></svg></button></div>
  <div class="stack gap-l c-cam"><button class="corner" aria-label="天空"><svg width="28" height="28"><use href="#globe"/></svg></button><button aria-label="场次"><svg width="28" height="28"><use href="#clapbig"/></svg></button><button class="corner" aria-label="标准摄像机"><svg width="28" height="28"><use href="#camst"/></svg></button><button class="corner" aria-label="摄像机"><svg width="28" height="28"><use href="#camplay"/></svg></button><button aria-label="摄像机组"><svg width="28" height="28"><use href="#camplay"/></svg></button></div>
 </aside>

 <aside class="side-panel d-flex flex-column flex-shrink-0">
  <div class="tabs d-flex flex-shrink-0"><button class="current">对象</button><button>场次</button></div>
  <div class="side-menu d-flex align-items-center flex-shrink-0">
   <button aria-label="菜单"><svg width="14" height="12" color="#888"><use href="#burger"/></svg></button>
   <div class="links"><a href="#">文件</a><a href="#">编辑</a><a href="#">查看</a><a href="#">对象</a></div>
   <svg class="chev" width="6" height="10"><use href="#chev"/></svg>
   <div class="tools"><button aria-label="搜索"><svg width="14" height="14"><use href="#search"/></svg></button><button aria-label="主页"><svg width="14" height="14"><use href="#home"/></svg></button><button aria-label="过滤"><svg width="14" height="14"><use href="#filter"/></svg></button><button aria-label="弹出"><svg width="14" height="14"><use href="#popout"/></svg></button></div>
  </div>
  <div class="objects flex-shrink-1"></div>
  <div class="tabs split d-flex flex-shrink-0"><button class="current">属性</button><button>层</button></div>
  <div class="side-menu d-flex align-items-center flex-shrink-0">
   <button aria-label="菜单"><svg width="14" height="12" color="#888"><use href="#burger"/></svg></button>
   <div class="links"><a href="#">模式</a></div><svg class="chev" width="6" height="10"><use href="#chev"/></svg>
   <div class="tools"><button class="dim" aria-label="后退"><svg width="14" height="14"><use href="#left"/></svg></button><button class="dim" aria-label="前进"><svg width="14" height="14"><use href="#right"/></svg></button><button class="dim" aria-label="向上"><svg width="14" height="14"><use href="#up"/></svg></button><button aria-label="搜索"><svg width="14" height="14"><use href="#search"/></svg></button><button aria-label="过滤"><svg width="14" height="14"><use href="#filter"/></svg></button><button aria-label="锁定"><svg width="14" height="14"><use href="#lock"/></svg></button><button aria-label="目标"><svg width="14" height="14"><use href="#target"/></svg></button><button aria-label="弹出"><svg width="14" height="14"><use href="#popout"/></svg></button></div>
  </div>
  <div class="object-row d-flex align-items-center flex-shrink-0 px-2">
   <svg width="16" height="14"><circle cx="3" cy="3" r="2.300"/><path d="M8 3H16M0 11H8"/><circle cx="13" cy="11" r="2.300"/></svg><span class="ms-2">场景</span>
   <div class="combo d-flex align-items-center ms-auto"><select aria-label="预设"><option>默认</option></select><svg width="19" height="18"><path class="f" d="M6 7H13L9.500 11Z"/></svg></div>
  </div>
  <div class="chips d-flex flex-column flex-shrink-0">
   <div class="chip-row"><button class="on">场景</button><button>信息</button><button>Cineware</button><button>XRefs</button></div>
   <div class="chip-row"><button>动画</button><button>子弹</button><button class="warn">模拟</button><button>待办事项</button><button>节点</button></div>
  </div>
  <div class="attrs">
   <h2>场景</h2>
   <div class="sect-box sect d-flex align-items-center"><svg width="6" height="10"><use href="#chev"/></svg><span>比例</span></div>
   <div class="sect-box time-box">
    <div class="sect open d-flex align-items-center"><svg width="8" height="6"><use href="#chevd"/></svg><span>时间</span></div>
    <div class="fields">
     <label for="fps">帧率</label><input id="fps" class="num" value="30"><label for="len">工程时长</label><input id="len" class="num cut">
     <label for="tmin">最小时长</label><input id="tmin" class="num" value="0 F"><label for="tmax">最大时长</label><input id="tmax" class="num cut">
     <label for="pmin">预览最小</label><input id="pmin" class="num" value="0 F"><label for="pmax">预览最大</label><input id="pmax" class="num cut">
    </div>
   </div>
   <div class="sect-box sect last d-flex align-items-center"><svg width="6" height="10"><use href="#chev"/></svg><span>执行</span></div>
   <div class="vbar"></div>
  </div>
  <div class="hbar flex-shrink-0"></div>
 </aside>
</main>

<footer class="statusbar d-flex align-items-center flex-shrink-0">
 <button aria-label="菜单"><svg width="14" height="12" color="#999"><use href="#burger"/></svg></button>
 <svg width="16" height="16"><use href="#check"/></svg>
 <span class="text-nowrap">移动：点击并拖动鼠标移动元素。按住 SHIFT 键量化移动；节点编辑模式时按住 SHIFT 键增加选择对象；按住 CTRL 键减少选择对象。</span>
</footer>
</div>
<script src="https://cdn.jsdelivr.net/npm/bootstrap@5.3.0/dist/js/bootstrap.bundle.min.js"></script>
<script>
let labels = '', ticks = '';
for (let f = 0; f <= 90; f++) {
  if (f % 5 === 0) labels += '<span>' + f + '</span>';
  const top = f % 30 === 0 ? (f ? 1 : 15) : f % 5 === 0 ? 17 : 18;
  ticks += 'M' + f + ' ' + top + 'V' + (f % 5 === 0 ? 20 : 19);
}
document.getElementById('labels').innerHTML = labels;
document.getElementById('ticks').setAttribute('d', ticks);
</script>
</body>
</html>
